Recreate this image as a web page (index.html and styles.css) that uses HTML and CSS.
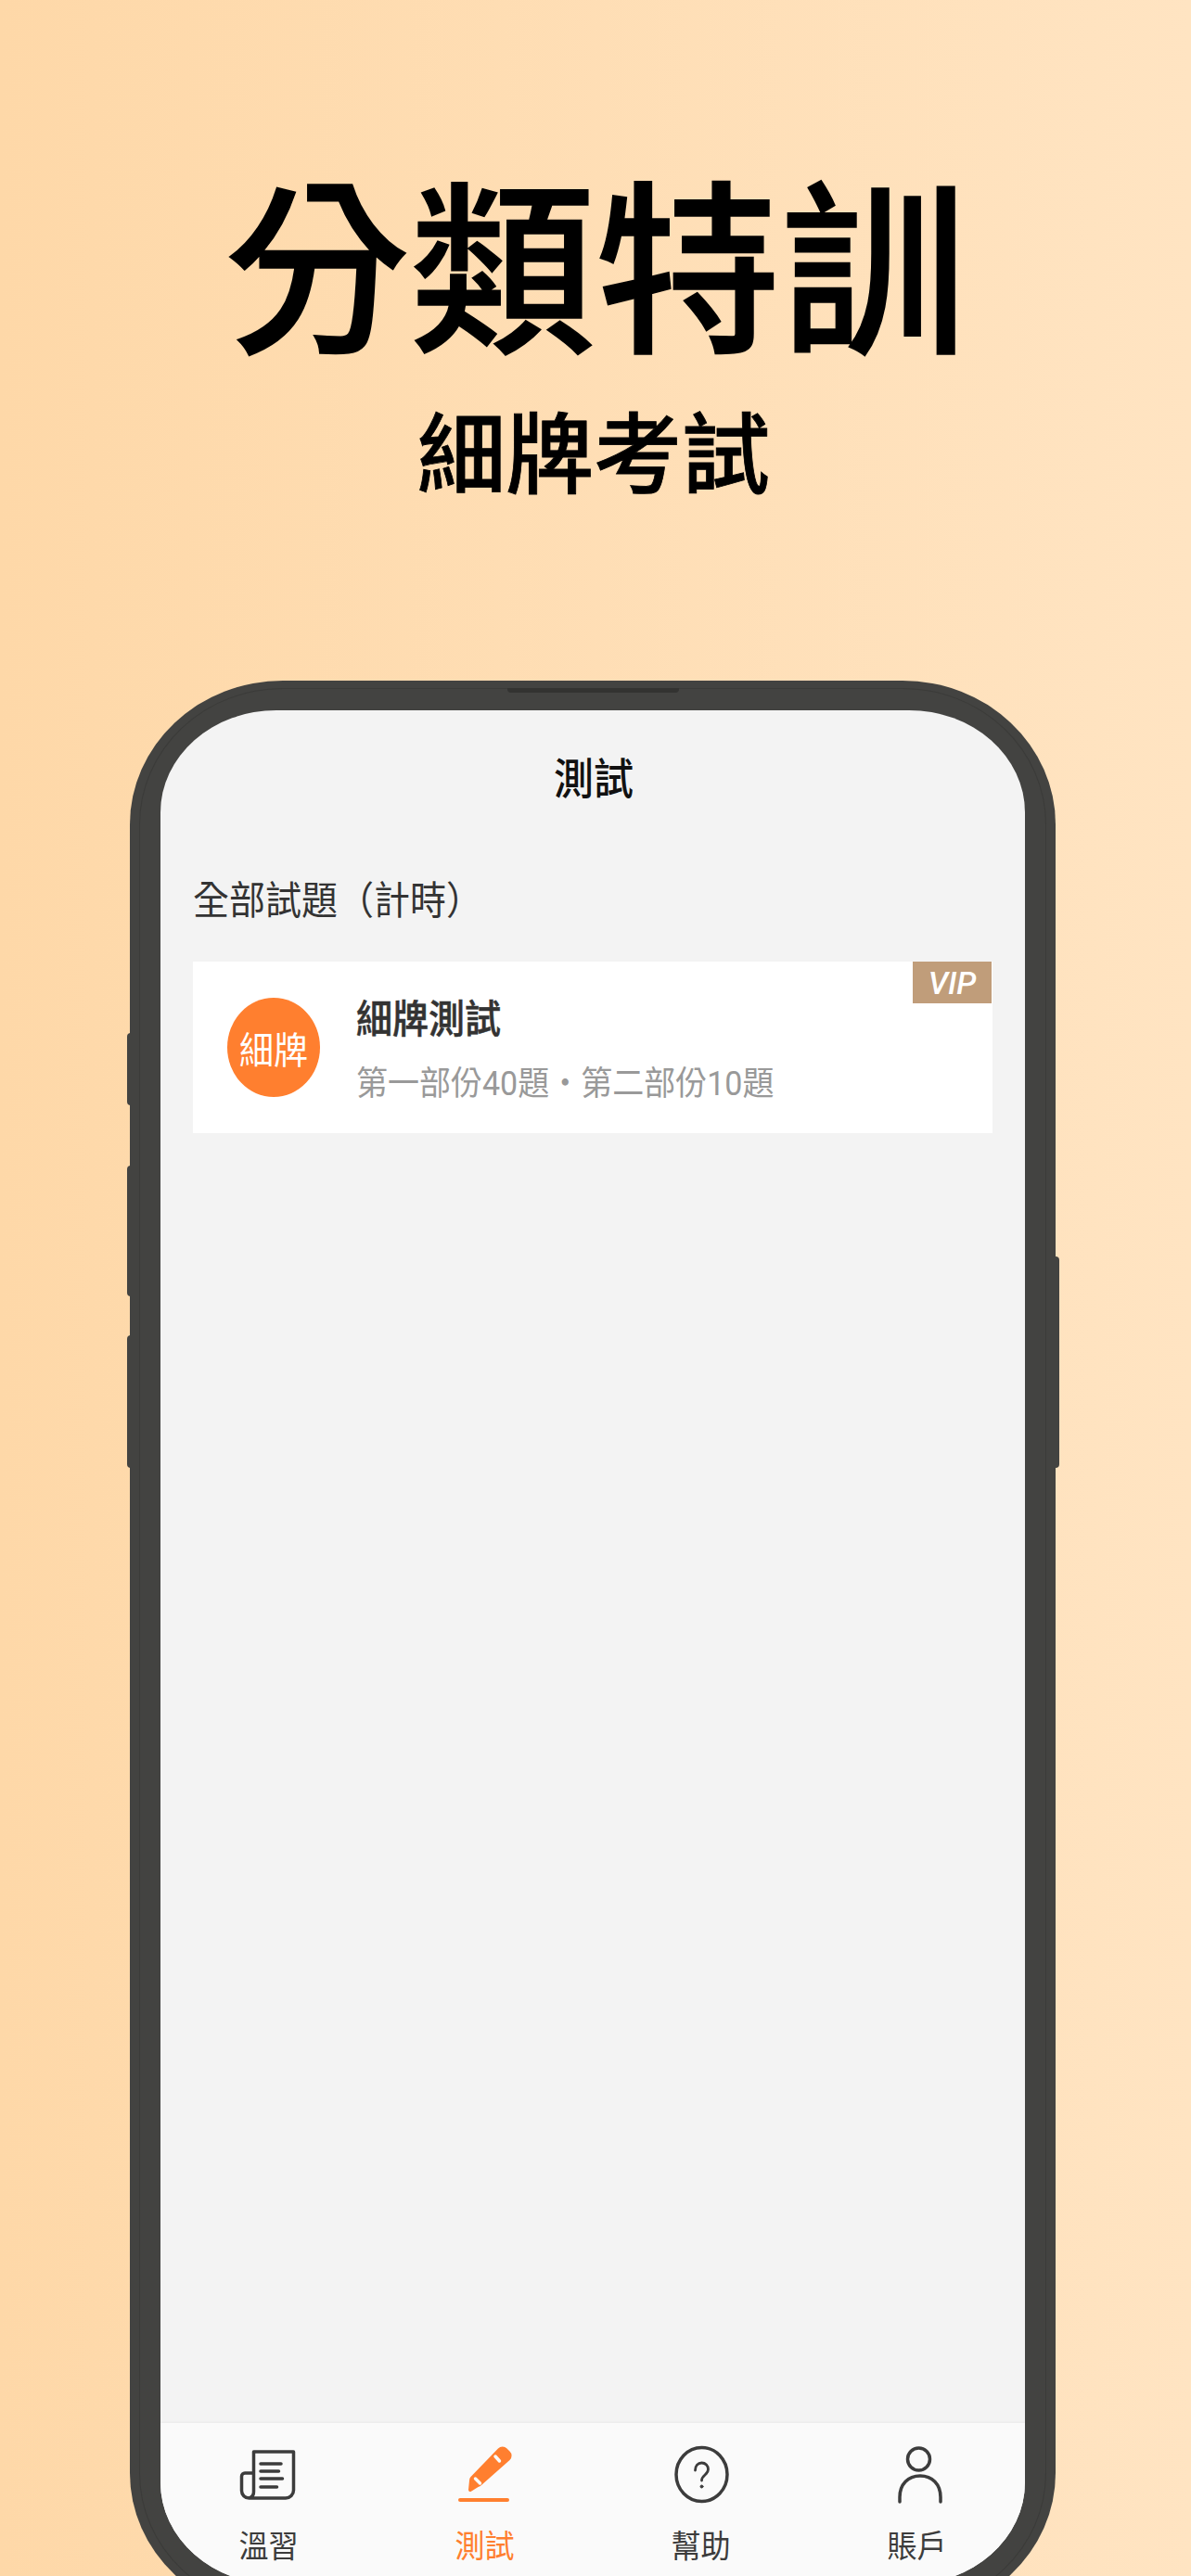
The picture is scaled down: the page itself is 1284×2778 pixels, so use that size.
FILE: index.html
```html
<!DOCTYPE html>
<html lang="zh-Hant">
<head>
<meta charset="utf-8">
<title>分類特訓</title>
<link rel="stylesheet" href="styles.css">
</head>
<body>
<div class="page">
  <h1 class="headline">分類特訓</h1>
  <p class="subhead">細牌考試</p>
  <div class="phone">
    <span class="btn btn-a"></span>
    <span class="btn btn-b"></span>
    <span class="btn btn-c"></span>
    <span class="btn btn-d"></span>
    <span class="notch"></span>
    <div class="screen">
      <header class="topbar"><span class="tall">測試</span></header>
      <main class="content">
        <h2 class="section tall">全部試題（計時）</h2>
        <div class="card">
          <span class="vip">VIP</span>
          <div class="avatar"><span class="tall">細牌</span></div>
          <div class="info">
            <div class="card-title tall">細牌測試</div>
            <div class="card-sub tall">第一部份40題・第二部份10題</div>
          </div>
        </div>
      </main>
      <nav class="tabs">
        <div class="tab">
          <svg class="icon" viewBox="0 0 64 66" fill="none" stroke="#3c3c3c" stroke-width="3.500" stroke-linecap="round" stroke-linejoin="round">
            <path d="M15.500 32H6a3.500 3.500 0 0 0-3.500 3.500V51a8 8 0 0 0 8 8H50a8.500 8.500 0 0 0 8.500-8.500V9H15.500V52a7 7 0 0 1-5 7"/>
            <path d="M23 22H45M23 30H42.500M23 38H46.500M23 47H40.500"/>
          </svg>
          <span class="tab-label tall">溫習</span>
        </div>
        <div class="tab active">
          <svg class="icon" viewBox="0 0 64 66">
            <path fill="#ff7f2f" d="M16.500 36 46 5.500a6.500 6.500 0 0 1 9.500 0l3 3a6.500 6.500 0 0 1 0 9.500L28 45q-1.500 1.500-3.500 2L16.500 52a2 2 0 0 1-2.500-2l1-10q0-2.500 1.500-4z"/>
            <path stroke="#fafafa" stroke-width="3.500" stroke-linecap="round" d="M43 14l4.500 5M21.500 38l5 5"/>
            <path stroke="#ff7f2f" stroke-width="4" stroke-linecap="round" d="M5 61H56"/>
          </svg>
          <span class="tab-label tall">測試</span>
        </div>
        <div class="tab">
          <svg class="icon" viewBox="0 0 64 66" fill="none" stroke="#3c3c3c" stroke-width="3.500" stroke-linecap="round">
            <ellipse cx="32.500" cy="33.500" rx="27.500" ry="29"/>
            <path stroke-width="2.800" d="M25.500 29c0-5 3-8 7-8s7 3 7 7c0 6-7 6-7 12"/>
            <circle cx="32.500" cy="46.500" r="1.500" fill="#3c3c3c" stroke-width="1"/>
          </svg>
          <span class="tab-label tall">幫助</span>
        </div>
        <div class="tab">
          <svg class="icon" viewBox="0 0 64 66" fill="none" stroke="#3c3c3c" stroke-width="3.500" stroke-linecap="round">
            <ellipse cx="33.500" cy="17" rx="12" ry="12"/>
            <path d="M13 63V58C13 44 22 35 35 35s22 9 22 23V63"/>
          </svg>
          <span class="tab-label tall">賬戶</span>
        </div>
      </nav>
    </div>
  </div>
</div>
</body>
</html>
```
FILE: styles.css
```css
* { box-sizing: border-box; }
html, body { margin: 0; padding: 0; }
body {
  font-family: Roboto, "Noto Sans CJK TC", "Noto Sans CJK SC", sans-serif;
  width: 1284px;
  height: 2778px;
  overflow: hidden;
}
.page {
  width: 1284px;
  height: 2778px;
  overflow: hidden;
  display: flex;
  flex-direction: column;
  align-items: center;
  background: linear-gradient(90deg, #fed8a8 0%, #ffe4c2 100%);
}
.headline {
  margin: 177px 0 0;
  font-size: 200px;
  line-height: 240px;
  font-weight: 500;
  color: #000;
  -webkit-text-stroke: 1.5px #000;
}
.subhead {
  margin: 18px 4px 0 0;
  font-size: 95px;
  line-height: 116px;
  font-weight: 500;
  color: #000;
  -webkit-text-stroke: 0.8px #000;
}
.phone {
  position: relative;
  flex: none;
  width: 998px;
  height: 2088px;
  margin: 183px 6px 0 0;
  padding: 32px 33px 35px;
  border-radius: 165px / 155px;
  background: #434341;
}
.phone::before {
  content: "";
  position: absolute;
  inset: 8px 10px;
  border: 1px solid #3b3b39;
  border-radius: 155px / 147px;
}
.notch {
  position: absolute;
  left: 407px;
  top: 8px;
  width: 185px;
  height: 5px;
  background: #333331;
  border-radius: 0 0 4px 4px;
}
.btn {
  position: absolute;
  background: #434341;
}
.btn-a { left: -3px; top: 380px; width: 4px; height: 78px; border-radius: 4px 0 0 4px; }
.btn-b { left: -3px; top: 523px; width: 4px; height: 141px; border-radius: 4px 0 0 4px; }
.btn-c { left: -3px; top: 706px; width: 4px; height: 143px; border-radius: 4px 0 0 4px; }
.btn-d { right: -4px; top: 621px; width: 5px; height: 228px; border-radius: 0 4px 4px 0; }
.screen {
  position: relative;
  width: 100%;
  height: 100%;
  display: flex;
  flex-direction: column;
  border-radius: 125px / 110px;
  overflow: hidden;
  background: #f3f3f3;
}
.tall {
  display: block;
  transform: scaleY(1.07);
}
.topbar {
  height: 140px;
  padding-left: 2px;
  display: flex;
  align-items: center;
  justify-content: center;
  font-size: 43px;
  font-weight: 500;
  color: #111;
}
.content {
  flex: 1;
  padding: 0 35px;
}
.section {
  margin: 38px 0 0;
  font-size: 39px;
  line-height: 56px;
  font-weight: 400;
  color: #333;
}
.card {
  position: relative;
  margin-top: 37px;
  height: 185px;
  display: flex;
  align-items: center;
  background: #fff;
}
.vip {
  position: absolute;
  right: 1px;
  top: 0;
  width: 85px;
  height: 45px;
  display: flex;
  align-items: center;
  justify-content: center;
  background: #c09d7a;
  color: #fff;
  font-size: 34px;
  font-weight: 500;
  font-style: italic;
}
.avatar {
  flex: none;
  width: 100px;
  height: 107px;
  margin-left: 37px;
  display: flex;
  align-items: center;
  justify-content: center;
  border-radius: 50%;
  background: #ff7f2f;
  color: #fff;
  font-size: 37px;
}
.info {
  margin-left: 39px;
  padding-top: 5px;
}
.card-title {
  font-size: 39px;
  line-height: 56px;
  font-weight: 500;
  color: #333;
  -webkit-text-stroke: 0.5px #333;
}
.card-sub {
  margin-top: 16px;
  font-size: 34px;
  line-height: 48px;
  color: #999;
}
.tabs {
  flex: none;
  height: 174px;
  display: flex;
  padding-top: 22px;
  background: #fafafa;
  box-shadow: 0 -1px 2px rgba(0,0,0,.04);
}
.tab {
  flex: 1;
  display: flex;
  flex-direction: column;
  align-items: center;
  color: #3c3c3c;
}
.tab.active { color: #ff7f2f; }
.icon {
  width: 64px;
  height: 66px;
  display: block;
}
.tab-label {
  margin-top: 21px;
  font-size: 32px;
  line-height: 48px;
}
```
